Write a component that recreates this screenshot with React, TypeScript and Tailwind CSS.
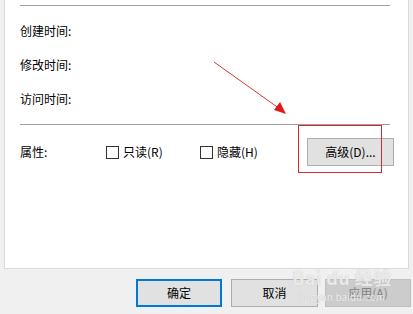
export default function App() {
  const font = { fontFamily: '"Noto Sans CJK SC", "Liberation Sans", sans-serif' };

  return (
    <div className="relative w-[413px] h-[314px] bg-[#f0f0f0] text-[12px] text-black overflow-hidden" style={font}>
      <div className="ml-[4px] w-[405px] h-[269px] bg-white border-l border-r border-b border-[#d9d9d9] pt-[5px] pl-[15px]">
        <div className="h-px w-[370px] bg-[#a0a0a0]" />
        <div className="mt-[8px]">
          <div className="h-[34px] flex items-center">创建时间:</div>
          <div className="h-[34px] flex items-center">修改时间:</div>
          <div className="h-[34px] flex items-center">访问时间:</div>
        </div>
        <div className="mt-[8px] h-px w-[370px] bg-[#a0a0a0]" />
        <div className="mt-[13px] h-[28px] flex items-center">
          <span className="w-[86px]">属性:</span>
          <label className="flex items-center gap-[4px] w-[94px]">
            <span className="w-[13px] h-[13px] border border-[#333]" />
            <span>只读(R)</span>
          </label>
          <label className="flex items-center gap-[4px] w-[107px]">
            <span className="w-[13px] h-[13px] border border-[#333]" />
            <span>隐藏(H)</span>
          </label>
          <button className="w-[87px] h-[28px] bg-[#e1e1e1] border border-[#adadad] text-[12px]">
            高级(D)...
          </button>
        </div>
      </div>

      <div className="flex mt-[10px] pl-[136px]">
        <button className="w-[86px] h-[28px] bg-[#e1e1e1] border-2 border-[#0078d7]">确定</button>
        <button className="ml-[9px] w-[87px] h-[28px] bg-[#e1e1e1] border border-[#adadad]">取消</button>
        <button className="ml-[7px] w-[86px] h-[28px] bg-[#cccccc] border border-[#bfbfbf] text-[#838383]">
          应用(A)
        </button>
      </div>

      {/* annotation: red box + arrow */}
      <div className="absolute left-[298px] top-[125px] w-[84px] h-[48px] border border-[#d42a2a]" />
      <svg className="absolute left-0 top-0" width="413" height="314">
        <line x1="214" y1="62" x2="280" y2="109" stroke="#d43a3a" strokeWidth="1" />
        <polygon points="286,114 274,110 280,102" fill="#e01818" />
      </svg>

      {/* watermark */}
      <div
        className="absolute left-[292px] top-[268px] flex flex-col items-center text-white/70 pointer-events-none"
        style={{ textShadow: "0 0 1px #b8b8b8" }}
      >
        <span className="text-[18px] font-bold leading-none tracking-wide">Bai du 经验</span>
        <span className="text-[10px] leading-none mt-[6px]">jingyan.baidu.com</span>
      </div>
    </div>
  );
}
